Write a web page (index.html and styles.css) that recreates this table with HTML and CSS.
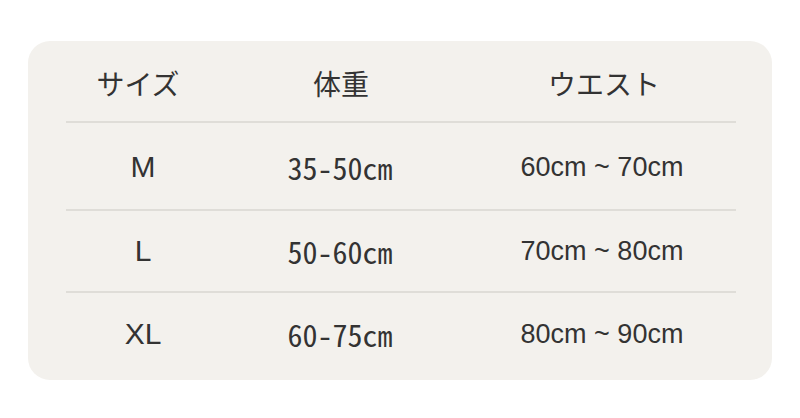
FILE: index.html
```html
<!DOCTYPE html>
<html lang="ja">
<head>
<meta charset="utf-8">
<link rel="stylesheet" href="styles.css">
</head>
<body>
<div class="card">
  <div class="table">
    <div class="row head">
      <div class="c1 jp">サイズ</div>
      <div class="c2 jp">体重</div>
      <div class="c3 jp">ウエスト</div>
    </div>
    <div class="row r1">
      <div class="c1 size">M</div>
      <div class="c2 weight">35-50cm</div>
      <div class="c3 waist">60cm ~ 70cm</div>
    </div>
    <div class="row r2">
      <div class="c1 size">L</div>
      <div class="c2 weight">50-60cm</div>
      <div class="c3 waist">70cm ~ 80cm</div>
    </div>
    <div class="row r3">
      <div class="c1 size">XL</div>
      <div class="c2 weight">60-75cm</div>
      <div class="c3 waist">80cm ~ 90cm</div>
    </div>
  </div>
</div>
</body>
</html>
```
FILE: styles.css
```css
html, body {
  margin: 0;
  padding: 0;
  background: #ffffff;
}
body {
  width: 800px;
  height: 418px;
  padding-top: 41px;
  box-sizing: border-box;
  color: #333333;
}
.card {
  margin-left: 28px;
  width: 744px;
  height: 339px;
  background: #f3f1ed;
  border-radius: 22px;
  padding: 0 36px 0 38px;
  box-sizing: border-box;
}
.table {
  display: flex;
  flex-direction: column;
}
.row {
  display: grid;
  grid-template-columns: 150px 250px 270px;
  align-items: center;
  border-bottom: 2px solid #dfddd8;
}
.row.head { height: 76px; padding-top: 4px; }
.row.r1 { height: 84px; padding-top: 2px; }
.row.r2 { height: 80px; }
.row.r3 { height: 82px; border-bottom: none; }
.row > div { text-align: center; white-space: nowrap; }
.jp {
  font-family: "Noto Sans CJK JP", "Noto Sans", sans-serif;
  font-size: 28px;
  font-weight: 400;
}
.head .c1 { padding-right: 6px; }
.head .c3 { padding-left: 6px; }
.size {
  font-family: "Liberation Sans", Arial, sans-serif;
  font-size: 30px;
  padding-left: 4px;
}
.weight {
  font-family: "Noto Sans CJK JP", "Noto Sans", sans-serif;
  font-feature-settings: "hwid" 1;
  font-size: 30px;
  font-weight: 400;
  padding-right: 2px;
}
.waist {
  font-family: "Liberation Sans", Arial, sans-serif;
  font-size: 27px;
  padding-left: 2px;
}
```
